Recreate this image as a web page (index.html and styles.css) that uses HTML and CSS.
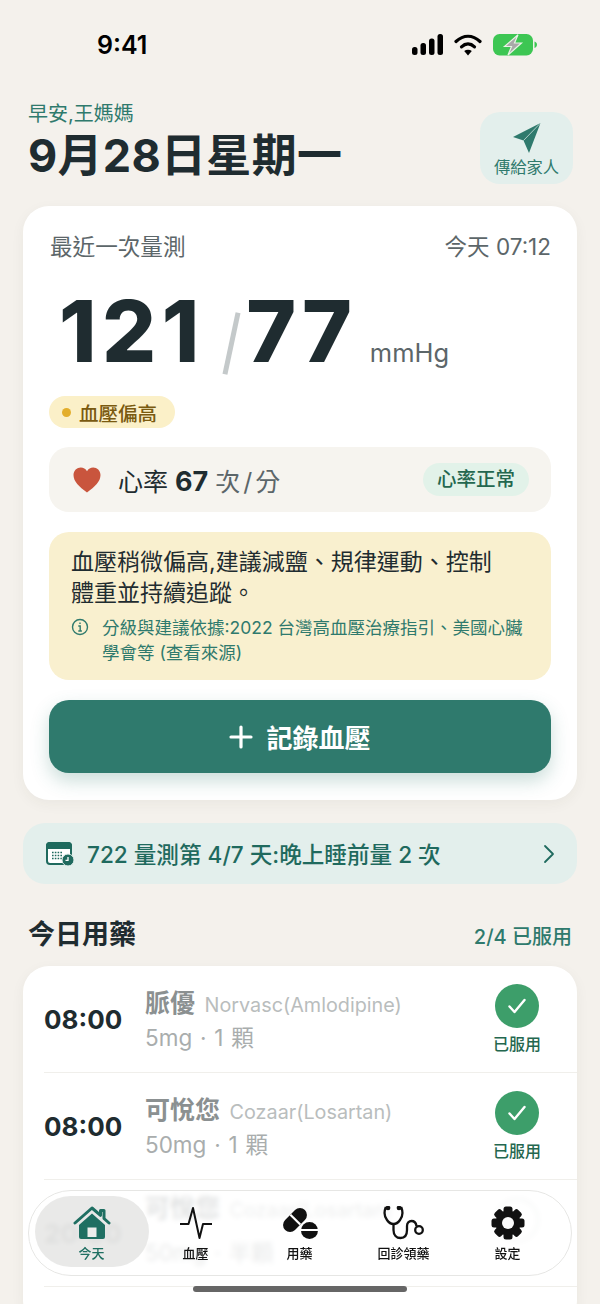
FILE: index.html
```html
<!DOCTYPE html>
<html lang="zh-Hant">
<head>
  <meta charset="UTF-8" />
  <meta name="viewport" content="width=device-width, initial-scale=1" />
  <title>今天</title>
  <link rel="stylesheet" href="styles.css">
</head>
<body>
  <div class="status-bar">
    <span class="status-time">9:41</span>
    <div class="status-icons">
      <svg width="31" height="22" viewBox="0 0 31 22"><rect x="0" y="13" width="5.500" height="8" rx="2.500"/><rect x="8.500" y="9" width="5.500" height="12" rx="2.500"/><rect x="17" y="4.500" width="5.500" height="16.500" rx="2.500"/><rect x="25.500" y="0" width="5.500" height="21" rx="2.500"/></svg>
      <svg width="28" height="22" viewBox="0 0 28 22"><path d="M2 7.500C9.500 .5 18.500 .5 26 7.500" fill="none" stroke="#000" stroke-width="3.200" stroke-linecap="round"/><path d="M7.500 12.800C11.500 9 16.500 9 20.500 12.800" fill="none" stroke="#000" stroke-width="3.200" stroke-linecap="round"/><path d="M14 21.500l-3.800-4.400c2.200-1.700 5.400-1.700 7.600 0z"/></svg>
      <svg width="44" height="22" viewBox="0 0 44 22"><rect x="0" y="0" width="40" height="21.500" rx="6.500" fill="#3dc653"/><path d="M41.500 7.500c1.500.5 2.500 1.600 2.500 3.200s-1 2.800-2.500 3.200z" fill="#3dc653"/><path d="M25 .8L11.500 12.500h7l-3.500 8.500 13.500-12h-7z" fill="#a9a9a9" stroke="#e9f3e6" stroke-width="1.200"/></svg>
    </div>
  </div>

  <header class="page-head">
    <div>
      <div class="greeting">早安,王媽媽</div>
      <h1>9月28日星期一</h1>
    </div>
    <button class="send-btn">
      <svg width="30" height="32" viewBox="0 0 30 32"><path d="M28.500 1L1 15l10.500 3.500L17 31z" fill="#2f7a6d"/><path d="M28.500 1L11.500 18.500" stroke="#e3efec" stroke-width="0.700"/></svg>
      <span>傳給家人</span>
    </button>
  </header>

  <main class="content">
    <!-- 最近一次量測 -->
    <section class="card latest">
      <div class="latest-top">
        <span class="latest-label">最近一次量測</span>
        <span>今天 07:12</span>
      </div>
      <div class="reading">
        <span class="reading-num sys">121</span>
        <span class="reading-slash"></span>
        <span class="reading-num dia">77</span>
        <span class="reading-unit">mmHg</span>
      </div>
      <div class="status-pill"><i></i>血壓偏高</div>
      <div class="heart-row">
        <svg class="heart" width="28" height="26" viewBox="0 0 28 26"><path d="M14 25.500C6 19.500 .5 14.500 .5 8 .5 3.500 4 .5 7.800 .5c2.600 0 4.800 1.300 6.200 3.700C15.400 1.800 17.600 .5 20.200 .5 24 .5 27.500 3.500 27.500 8c0 6.500-5.500 11.500-13.500 17.500z" fill="#c9553d"/></svg>
        <span class="heart-text">心率 <b>67</b> <em>次/分</em></span>
        <span class="heart-tag">心率正常</span>
      </div>
      <div class="advice">
        <p class="advice-main">血壓稍微偏高,建議減鹽、規律運動、控制體重並持續追蹤。</p>
        <div class="advice-src">
          <svg width="18" height="18" viewBox="0 0 18 18" fill="none" stroke="#2f7a6d" stroke-width="1.400"><circle cx="9" cy="9" r="7.500"/><path d="M7.300 8h1.900v5M7.300 13h3.600M9 4.600v1.300"/></svg>
          <span>分級與建議依據:2022 台灣高血壓治療指引、美國心臟學會等 (查看來源)</span>
        </div>
      </div>
      <button class="record-btn">
        <svg width="24" height="24" viewBox="0 0 24 24"><path d="M12 2v20M2 12h20" stroke="#fff" stroke-width="3.200" stroke-linecap="round"/></svg>
        記錄血壓
      </button>
    </section>

    <!-- 722 量測 -->
    <a class="plan-bar">
      <svg width="28" height="26" viewBox="0 0 28 26"><rect x="1" y="2" width="24" height="21" rx="3" fill="#fff" stroke="#1f6a5e" stroke-width="2"/><path d="M1 7V5a3 3 0 0 1 3-3h18a3 3 0 0 1 3 3v2z" fill="#1f6a5e" stroke="#1f6a5e" stroke-width="2"/><path d="M6 11.500h11M6 14.500h11M6 17.500h11" stroke="#1f6a5e" stroke-width="1.600" stroke-dasharray="1.600 1.200"/><circle cx="22" cy="19" r="6" fill="#1f6a5e" stroke="#e3efec" stroke-width="1"/><path d="M22 16v3.300h-2.500" fill="none" stroke="#fff" stroke-width="1.300"/></svg>
      <span class="plan-text">722 量測第 4/7 天:晚上睡前量 2 次</span>
      <svg class="plan-arrow" width="12" height="20" viewBox="0 0 12 20"><path d="M2 2l8 8-8 8" fill="none" stroke="#1f6a5e" stroke-width="1.800" stroke-linecap="round" stroke-linejoin="round"/></svg>
    </a>

    <!-- 今日用藥 -->
    <div class="section-head">
      <h2>今日用藥</h2>
      <span>2/4 已服用</span>
    </div>
    <section class="card meds">
      <div class="med-row">
        <div class="med-time">08:00</div>
        <div class="med-info">
          <div class="med-name"><b>脈優</b> Norvasc(Amlodipine)</div>
          <div class="med-dose">5mg · 1 顆</div>
        </div>
        <div class="med-state">
          <span class="check"><svg width="24" height="24" viewBox="0 0 24 24"><path d="M4.500 12.500l5 5.500 10-12" fill="none" stroke="#fff" stroke-width="2.400" stroke-linecap="round" stroke-linejoin="round"/></svg></span>
          已服用
        </div>
      </div>
      <div class="med-row">
        <div class="med-time">08:00</div>
        <div class="med-info">
          <div class="med-name"><b>可悅您</b> Cozaar(Losartan)</div>
          <div class="med-dose">50mg · 1 顆</div>
        </div>
        <div class="med-state">
          <span class="check"><svg width="24" height="24" viewBox="0 0 24 24"><path d="M4.500 12.500l5 5.500 10-12" fill="none" stroke="#fff" stroke-width="2.400" stroke-linecap="round" stroke-linejoin="round"/></svg></span>
          已服用
        </div>
      </div>
      <div class="med-row under-glass">
        <div class="med-time">20:00</div>
        <div class="med-info">
          <div class="med-name"><b>可悅您</b> Cozaar(Losartan)</div>
          <div class="med-dose">50mg · 半顆</div>
        </div>
        <div class="med-state">
          <span class="check check-todo"></span>
        </div>
      </div>
    </section>
  </main>

  <!-- 底部導覽 -->
  <nav class="tabbar">
    <a class="tab active">
      <svg width="38" height="34" viewBox="0 0 38 34"><path d="M2 17L19 2l8.500 7.300V4.500h3.500v8L36 17" fill="none" stroke="#1f6f62" stroke-width="3" stroke-linecap="round" stroke-linejoin="round"/><path d="M6 19L19 7.500 32 19v12a2 2 0 0 1-2 2H8a2 2 0 0 1-2-2z" fill="#1f6f62"/><rect x="14.500" y="21.500" width="9" height="9.500" fill="#ecedeb"/></svg>
      <span>今天</span>
    </a>
    <a class="tab">
      <svg width="34" height="34" viewBox="0 0 34 34"><path d="M1 18h8.500L14 2l6.500 30 3.500-14h9" fill="none" stroke="#111" stroke-width="2" stroke-linejoin="round"/></svg>
      <span>血壓</span>
    </a>
    <a class="tab">
      <svg width="38" height="34" viewBox="0 0 38 34"><g transform="rotate(-45 14 14)"><rect x="0" y="7" width="28" height="14" rx="7" fill="#111"/><path d="M14.500 7v14" stroke="#fff" stroke-width="2.200"/></g><circle cx="28.500" cy="24.500" r="8.500" fill="#111"/><path d="M19 24h19" stroke="#fff" stroke-width="2"/></svg>
      <span>用藥</span>
    </a>
    <a class="tab">
      <svg width="44" height="34" viewBox="0 0 44 34" fill="none" stroke="#111" stroke-width="2.300"><path d="M6 2H3.500C2 6 2 10 5 14c2 3 4 4 6.500 4s4.500-1 6.500-4c3-4 3-8 1.500-12H17"/><path d="M11.500 18v6c0 5 3 8 7 8s6.500-3 6.500-8v-4c0-3 2-5 4.500-5s4.500 2 5 5"/><circle cx="37" cy="24" r="3.800"/><circle cx="6" cy="2" r="1.200" fill="#111"/><circle cx="17" cy="2" r="1.200" fill="#111"/></svg>
      <span>回診領藥</span>
    </a>
    <a class="tab">
      <svg width="34" height="34" viewBox="0 0 34 34"><g fill="#111"><circle cx="17" cy="17" r="12.500"/><rect x="12.500" y="0.500" width="9" height="33" rx="2.500"/><rect x="12.500" y="0.500" width="9" height="33" rx="2.500" transform="rotate(45 17 17)"/><rect x="12.500" y="0.500" width="9" height="33" rx="2.500" transform="rotate(90 17 17)"/><rect x="12.500" y="0.500" width="9" height="33" rx="2.500" transform="rotate(135 17 17)"/></g><circle cx="17" cy="17" r="6" fill="#fafafa"/></svg>
      <span>設定</span>
    </a>
  </nav>
  <div class="home-bar"></div>
</body>
</html>
```

FILE: styles.css
```css
/* base */
*, *::before, *::after {
  margin: 0;
  padding: 0;
  box-sizing: border-box;
}
html, body {
  height: 1304px;
  overflow: hidden;
}
body {
  position: relative;
  font-family: "Inter", "Noto Sans CJK TC", sans-serif;
  background: #f4f1ec;
  color: #1f2c30;
}
button {
  font-family: inherit;
  border: none;
}

/* status bar */
.status-bar {
  height: 88px;
  padding: 30px 63px 0 97px;
  display: flex;
  justify-content: space-between;
}
.status-time {
  font-size: 25px;
  font-weight: 600;
  line-height: 30px;
  color: #000;
}
.status-icons {
  display: flex;
  gap: 11px;
  padding-top: 4px;
  height: 26px;
}

/* header */
.page-head {
  height: 118px;
  padding: 12px 27px 0 28px;
  display: flex;
  justify-content: space-between;
}
.greeting {
  font-size: 20px;
  line-height: 28px;
  color: #2f7a6d;
}
h1 {
  font-size: 45px;
  line-height: 50px;
  font-weight: 700;
  margin-top: 3px;
  letter-spacing: 0.3px;
}
.send-btn {
  width: 93px;
  height: 72px;
  margin-top: 12px;
  flex: none;
  border-radius: 20px;
  background: #e3efec;
  color: #2f7a6d;
  font-size: 16.300px;
  display: flex;
  flex-direction: column;
  align-items: center;
  gap: 0;
  padding-top: 10px;
}

.content {
  padding: 0 23px;
}
.card {
  background: #fff;
  border-radius: 26px;
  box-shadow: 0 4px 14px rgba(60, 60, 40, 0.05);
}

/* latest reading */
.latest {
  height: 594px;
  padding: 24px 26px 0 26px;
}
.latest-top {
  display: flex;
  justify-content: space-between;
  font-size: 22.500px;
  line-height: 34px;
  color: #5c6669;
}
.latest-label {
  font-size: 22.600px;
  margin-left: 1px;
}
.reading {
  display: flex;
  align-items: baseline;
  height: 92px;
  margin-top: 22px;
  padding-left: 10px;
}
.reading-num {
  font-size: 85px;
  line-height: 92px;
  font-weight: 800;
}
.sys {
  letter-spacing: 5.500px;
}
.dia {
  letter-spacing: 4px;
}
.reading-slash {
  width: 5px;
  height: 63px;
  background: #c4c9ca;
  transform: rotate(12deg);
  margin: 0 12px 0 24.500px;
  position: relative;
  top: 13px;
}
.reading-unit {
  font-size: 25.500px;
  line-height: 34px;
  color: #5c6669;
  margin-left: 14px;
}
.status-pill {
  width: 126px;
  height: 32px;
  margin-top: 18px;
  border-radius: 17px;
  background: #fbf0c8;
  color: #7a5a10;
  font-size: 19.500px;
  font-weight: 500;
  display: flex;
  align-items: center;
  gap: 8px;
  padding-left: 13px;
}
.status-pill i {
  width: 9px;
  height: 9px;
  border-radius: 50%;
  background: #e3ae2c;
}
.heart-row {
  height: 65px;
  margin-top: 19px;
  padding: 0 22px 0 24px;
  border-radius: 20px;
  background: #f6f4ef;
  display: flex;
  align-items: center;
}
.heart-text {
  margin-left: 17px;
  flex: 1;
  font-size: 25px;
}
.heart-text b {
  font-size: 27px;
  font-weight: 700;
}
.heart-text em {
  font-style: normal;
  color: #5c6669;
  letter-spacing: 3px;
}
.heart-tag {
  height: 33px;
  padding: 0 14px;
  border-radius: 17px;
  background: #e2f2e9;
  color: #24674f;
  font-size: 19.500px;
  line-height: 33px;
  font-weight: 500;
}
.advice {
  height: 148px;
  margin-top: 20px;
  padding: 15px 22px 0 22px;
  border-radius: 20px;
  background: #f9f0cf;
}
.advice-main {
  font-size: 23px;
  line-height: 31px;
  color: #1f2c30;
  width: 440px;
}
.advice-src {
  display: flex;
  gap: 13px;
  margin-top: 6px;
  font-size: 17.500px;
  line-height: 25px;
  color: #2f7a6d;
}
.advice-src svg {
  flex: none;
  margin-top: 3px;
}
.record-btn {
  width: 100%;
  height: 73px;
  margin-top: 20px;
  border-radius: 20px;
  background: #2f7a6d;
  color: #fff;
  font-size: 26px;
  font-weight: 700;
  display: flex;
  align-items: center;
  justify-content: center;
  gap: 13px;
  box-shadow: 0 8px 18px rgba(47, 122, 109, 0.25);
}

/* 722 plan */
.plan-bar {
  height: 61px;
  margin-top: 23px;
  padding: 0 22px 0 23px;
  border-radius: 22px;
  background: #e3efec;
  color: #1f6a5e;
  display: flex;
  align-items: center;
}
.plan-text {
  flex: 1;
  margin-left: 13px;
  font-size: 22.600px;
  font-weight: 500;
}

/* medication */
.section-head {
  margin: 26px 5px 0 5px;
  height: 56px;
  display: flex;
  justify-content: space-between;
  align-items: baseline;
}
h2 {
  font-size: 27px;
  line-height: 50px;
  font-weight: 700;
}
.section-head span {
  font-size: 20px;
  font-weight: 500;
  color: #2f7a6d;
}
.meds {
  height: 360px;
  padding-left: 21px;
}
.med-row {
  height: 107px;
  display: flex;
  align-items: center;
  border-bottom: 1px solid #f0efeb;
}
.med-time {
  width: 101px;
  font-size: 26px;
  font-weight: 700;
}
.med-info {
  flex: 1;
  color: #b9bdbd;
  font-size: 19.800px;
}
.med-name {
  line-height: 34px;
  margin-top: 2px;
}
.med-name b {
  font-size: 25px;
  font-weight: 700;
  color: #8b9091;
  margin-right: 4px;
}
.med-dose {
  font-size: 22.500px;
  line-height: 32px;
  color: #a9adad;
  word-spacing: 1.500px;
}
/* the row under the tab bar looks bent by the glass */
.under-glass .med-name {
  margin-top: -6px;
}
.under-glass .med-dose {
  margin-top: 10px;
}
.med-state {
  width: 82px;
  margin-right: 19px;
  display: flex;
  flex-direction: column;
  align-items: center;
  gap: 3px;
  font-size: 16px;
  font-weight: 500;
  color: #24674f;
}
.check {
  width: 44px;
  height: 44px;
  border-radius: 50%;
  background: #3d9e6a;
  display: flex;
  align-items: center;
  justify-content: center;
}
.check-todo {
  background: #fff;
  border: 2px solid #d9dcdb;
  margin-bottom: 26px;
}

/* tab bar */
.tabbar {
  position: absolute;
  left: 28px;
  top: 1190px;
  width: 544px;
  height: 86px;
  padding: 5px 0 0 10.500px;
  border-radius: 43px;
  border: 1.500px solid #e6e6e4;
  background: rgba(255, 255, 255, 0.74);
  backdrop-filter: blur(2.500px);
  display: flex;
}
.tab {
  width: 104px;
  height: 71px;
  padding-top: 4px;
  display: flex;
  flex-direction: column;
  align-items: center;
  justify-content: center;
  gap: 3px;
  border-radius: 37px;
  font-size: 13px;
  font-weight: 500;
  color: #111;
}
.tab.active {
  background: rgba(228, 228, 226, 0.8);
  color: #1f6f62;
  width: 114px;
  margin: 0 -5px;
}
.home-bar {
  position: absolute;
  left: 193px;
  top: 1286px;
  width: 214px;
  height: 6px;
  border-radius: 3px;
  background: #666;
}
```
